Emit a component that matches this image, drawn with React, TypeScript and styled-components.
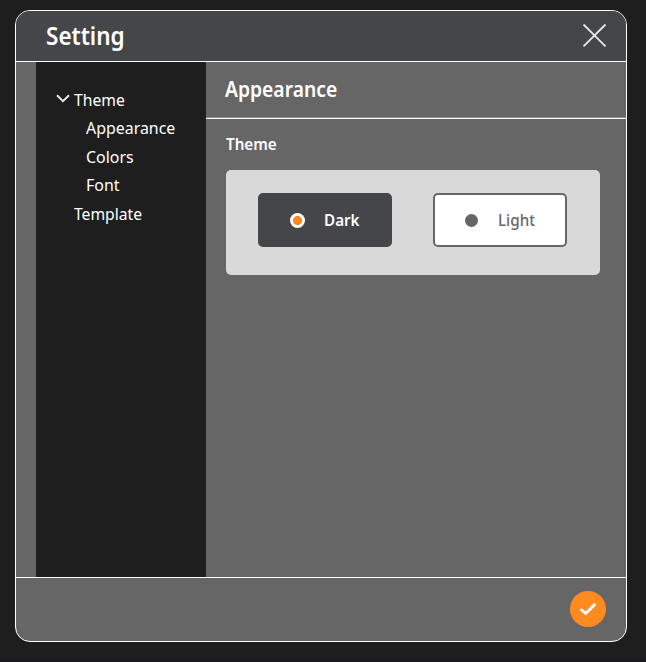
import React, { useState } from "react";
import styled, { createGlobalStyle } from "styled-components";

const Global = createGlobalStyle`
  * { box-sizing: border-box; }
  body { margin: 0; background: #1e1e1e; font-family: "Noto Sans", sans-serif; }
`;

const Page = styled.div`
  height: 662px;
  padding: 10px 19px 20px 15px;
  background: #1e1e1e;
  border-bottom: 2px solid #1c1a1e;
`;

const Dialog = styled.section`
  display: grid;
  grid-template-rows: 51px 515px 1fr;
  width: 612px;
  height: 632px;
  overflow: hidden;
  border: 1px solid #fff;
  border-radius: 15px;
  background: #666;
  color: #fff;
`;

const Header = styled.header`
  display: flex;
  align-items: center;
  justify-content: space-between;
  padding: 0 19px 2px 30px;
  background: #45464a;
  border-bottom: 1px solid #fff;
`;

const Label = styled.span<{ $size: number; $weight?: number; $scale?: number }>`
  display: block;
  font-size: ${(p) => p.$size}px;
  font-weight: ${(p) => p.$weight ?? 400};
  line-height: 28px;
  white-space: nowrap;
  transform: scaleX(${(p) => p.$scale ?? 1});
  transform-origin: left center;
`;

const IconButton = styled.button`
  display: flex;
  padding: 0;
  border: 0;
  background: none;
  color: #fff;
`;

const Body = styled.div`
  display: grid;
  grid-template-columns: 170px 1fr;
  padding-left: 20px;
`;

const Sidebar = styled.nav`
  padding: 23.5px 0 0 20px;
  background: #1e1e1e;
`;

const NavItem = styled.div<{ $depth?: number }>`
  display: flex;
  align-items: center;
  height: 28.5px;
  padding-left: ${(p) => (p.$depth ? 29.5 : 0)}px;
`;

const Chevron = styled.span`
  display: flex;
  width: 18.4px;
  padding-bottom: 2px;
`;

const Content = styled.main`
  min-width: 0;
`;

const ContentTitle = styled.div`
  height: 57px;
  padding: 13px 19px 0;
  border-bottom: 1px solid #fff;
  box-shadow: inset 0 -1px #8c8c8c;
`;

const Section = styled.div`
  padding: 11px 26px 0 20px;
`;

const SectionTitle = styled(Label)`
  margin-left: -0.5px;
`;

const Options = styled.div`
  display: flex;
  justify-content: space-between;
  height: 105px;
  margin-top: 12px;
  padding: 23px 33px 0 32px;
  border-radius: 5px;
  background: #d9d9d9;
`;

const Option = styled.button<{ $dark?: boolean }>`
  display: flex;
  align-items: center;
  width: 134px;
  height: 54px;
  padding: 0 0 0 30px;
  border: 2px solid ${(p) => (p.$dark ? "#45464a" : "#666")};
  border-radius: 5px;
  background: ${(p) => (p.$dark ? "#45464a" : "#fff")};
  color: ${(p) => (p.$dark ? "#fff" : "#666")};
  font-family: inherit;
`;

const Dot = styled.span<{ $on: boolean }>`
  flex: none;
  width: ${(p) => (p.$on ? 15 : 13)}px;
  height: ${(p) => (p.$on ? 15 : 13)}px;
  margin-right: ${(p) => (p.$on ? 19 : 20)}px;
  border-radius: 50%;
  background: ${(p) => (p.$on ? "radial-gradient(circle, #ff8a1f 4.2px, #fff 4.9px)" : "#666")};
`;

const Footer = styled.footer`
  display: flex;
  align-items: center;
  justify-content: flex-end;
  padding: 0 20px 1px 0;
  border-top: 1px solid #fff;
`;

const Confirm = styled(IconButton)`
  width: 36px;
  height: 36px;
  align-items: center;
  justify-content: center;
  border-radius: 50%;
  background: #ff8a1f;
`;

const nav = [
  { text: "Theme", open: true },
  { text: "Appearance", depth: 1 },
  { text: "Colors", depth: 1 },
  { text: "Font", depth: 1 },
  { text: "Template" },
];

export default function App() {
  const [theme, setTheme] = useState("Dark");
  return (
    <Page>
      <Global />
      <Dialog>
        <Header>
          <Label $size={25} $weight={600} $scale={0.9}>Setting</Label>
          <IconButton aria-label="Close">
            <svg width="25" height="24" viewBox="0 0 25 24" fill="none" stroke="#e6e6e6" strokeWidth="1.8">
              <path d="M1.5 1.5 23.5 23.3M23.5 1.5 1.5 23.3" />
            </svg>
          </IconButton>
        </Header>
        <Body>
          <Sidebar>
            {nav.map((item) => (
              <NavItem key={item.text} $depth={item.depth}>
                {!item.depth && (
                  <Chevron>
                    {item.open && (
                      <svg width="14" height="9" viewBox="0 0 14 9" fill="none" stroke="#e6e6e6" strokeWidth="2">
                        <path d="M1 1.2 7 7.2 13 1.2" />
                      </svg>
                    )}
                  </Chevron>
                )}
                <Label $size={16} $scale={item.depth ? 0.995 : 0.98}>{item.text}</Label>
              </NavItem>
            ))}
          </Sidebar>
          <Content>
            <ContentTitle>
              <Label $size={21} $weight={600} $scale={0.918}>Appearance</Label>
            </ContentTitle>
            <Section>
              <SectionTitle $size={16} $weight={600} $scale={0.95}>Theme</SectionTitle>
              <Options>
                {["Dark", "Light"].map((name) => (
                  <Option key={name} $dark={name === "Dark"} onClick={() => setTheme(name)}>
                    <Dot $on={theme === name} />
                    <Label $size={16} $weight={name === "Dark" ? 600 : 500} $scale={0.95}>{name}</Label>
                  </Option>
                ))}
              </Options>
            </Section>
          </Content>
        </Body>
        <Footer>
          <Confirm aria-label="Apply">
            <svg width="18" height="14" viewBox="0 0 18 14" fill="none" stroke="#fff" strokeWidth="3">
              <path d="M1.7 7 6.7 11.5 16.3 2" />
            </svg>
          </Confirm>
        </Footer>
      </Dialog>
    </Page>
  );
}
